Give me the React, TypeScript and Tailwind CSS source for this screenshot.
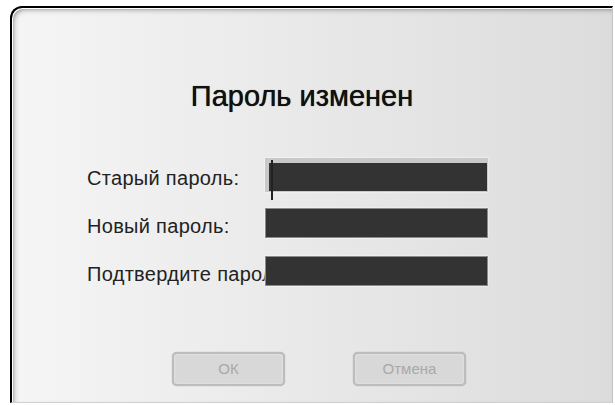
import React from "react";

const fields = [
  { label: "Старый пароль:", focused: true },
  { label: "Новый пароль:", focused: false },
  { label: "Подтвердите пароль:", focused: false },
];

function PasswordField({ focused }: { focused: boolean }) {
  return (
    <div
      className={
        focused
          ? "relative z-10 shrink-0 w-[223px] h-[34px] border-t-[5px] border-l-[4px] border-r border-b border-[#c9c9c9] bg-[#333333] shadow-[0_0_2px_#ffffff]"
          : "relative z-10 shrink-0 w-[223px] h-[30px] border border-[#8a8a8a] bg-[#333333] shadow-[0_0_2px_#ffffff]"
      }
    >
      {focused ? (
        <span className="absolute left-[2px] top-[-3px] w-[2px] h-[40px] bg-[#222]" />
      ) : null}
    </div>
  );
}

export default function App() {
  return (
    <div className="w-[615px] h-[405px] bg-white pl-[10px] pt-[6px] font-['Liberation_Sans',Arial,sans-serif]">
      <div className="w-[603px] h-[397px] flex flex-col border-t-2 border-l-2 border-black rounded-tl-[12px] border-r border-r-[#c4c4c4] border-b border-b-[#cfcfcf] bg-linear-to-r from-[#f5f5f5] to-[#dcdcdc] shadow-[inset_1px_1px_0_#ffffff,inset_3px_3px_6px_-3px_#555]">
        {/* heading */}
        <h1 className="mt-[74px] pr-[20px] text-center text-[29px] leading-none text-[#111] [text-shadow:0_0_0.7px_#000]">
          Пароль изменен
        </h1>

        {/* form rows */}
        <div className="mt-[47px] pl-[75px] flex flex-col gap-[14px]">
          {fields.map((f) => (
            <div key={f.label} className="flex items-center h-[34px]">
              <div className="w-[178px] shrink-0 whitespace-nowrap text-[20px] tracking-[0.3px] text-[#222] pt-[6px]">
                {f.label}
              </div>
              <PasswordField focused={f.focused} />
            </div>
          ))}
        </div>

        {/* buttons */}
        <div className="mt-auto mb-[16px] pl-[160px] flex gap-[68px]">
          <button className="w-[113px] h-[34px] rounded-[5px] border-2 border-[#bdbdbd] bg-[#d8d8d8] text-[15px] text-[#a9a9a9] shadow-[inset_0_0_2px_#eeeeee,0_0_1px_#999]">
            ОК
          </button>
          <button className="w-[113px] h-[34px] rounded-[5px] border-2 border-[#bdbdbd] bg-[#d8d8d8] text-[15px] text-[#a9a9a9] shadow-[inset_0_0_2px_#eeeeee,0_0_1px_#999]">
            Отмена
          </button>
        </div>
      </div>
    </div>
  );
}
